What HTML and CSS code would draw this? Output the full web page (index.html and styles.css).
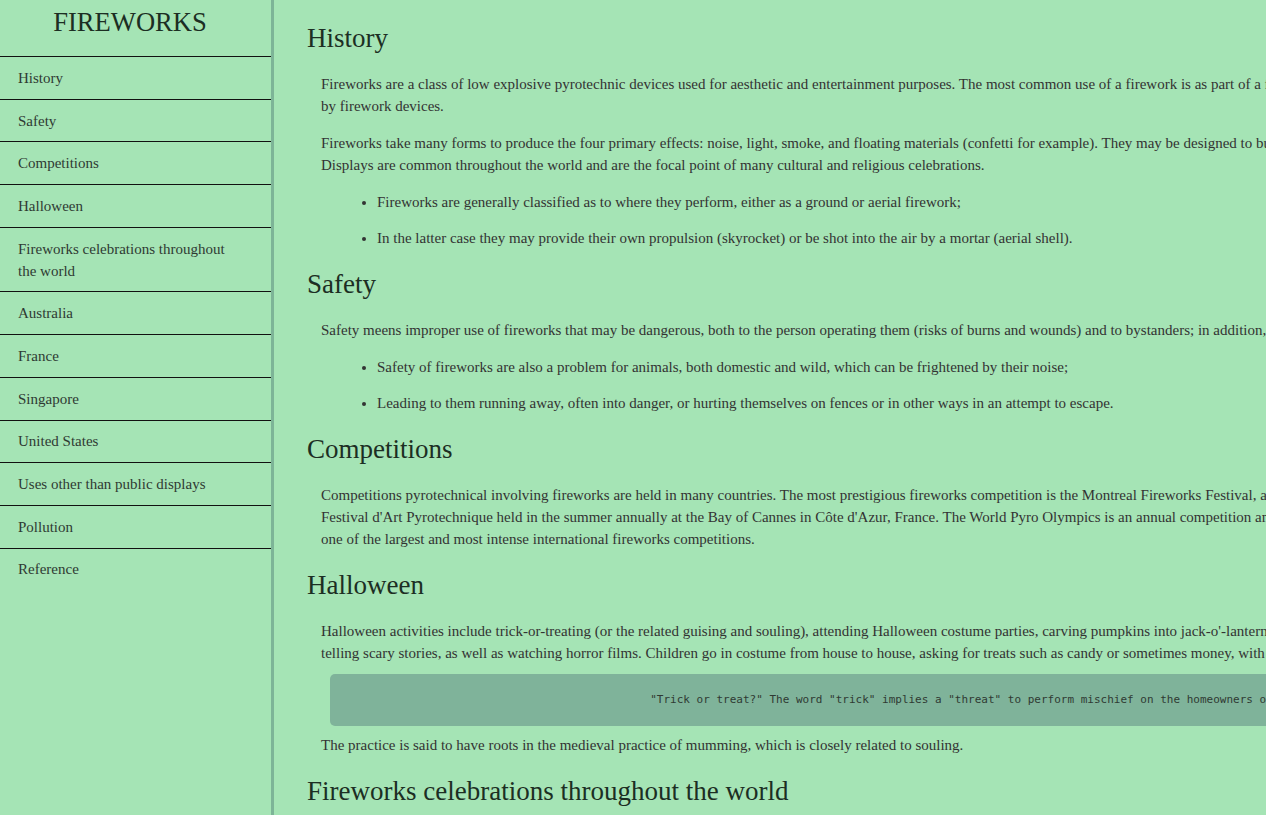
FILE: index.html
```html
<!DOCTYPE html>
<html lang="en">
<head>
  <meta charset="utf-8">
  <title>Fireworks</title>
  <link rel="stylesheet" href="styles.css">
</head>
<body>
  <nav id="navbar" class="navbar">
    <header class="nav-title">FIREWORKS</header>
    <ul class="nav-list">
      <li><a class="nav-link" href="#History">History</a></li>
      <li><a class="nav-link" href="#Safety">Safety</a></li>
      <li><a class="nav-link" href="#Competitions">Competitions</a></li>
      <li><a class="nav-link" href="#Halloween">Halloween</a></li>
      <li><a class="nav-link" href="#Fireworks_celebrations_throughout_the_world">Fireworks celebrations throughout the world</a></li>
      <li><a class="nav-link" href="#Australia">Australia</a></li>
      <li><a class="nav-link" href="#France">France</a></li>
      <li><a class="nav-link" href="#Singapore">Singapore</a></li>
      <li><a class="nav-link" href="#United_States">United States</a></li>
      <li><a class="nav-link" href="#Uses_other_than_public_displays">Uses other than public displays</a></li>
      <li><a class="nav-link" href="#Pollution">Pollution</a></li>
      <li><a class="nav-link" href="#Reference">Reference</a></li>
    </ul>
  </nav>

  <main id="main-doc" class="main-doc">
    <section class="main-section" id="History">
      <header class="section-title">History</header>
      <p>Fireworks are a class of low explosive pyrotechnic devices used for aesthetic and entertainment purposes. The most common use of a firework is as part of a fireworks display (also called a firework show or pyrotechnic), a display of the effects produced by firework devices.</p>
      <p>Fireworks take many forms to produce the four primary effects: noise, light, smoke, and floating materials (confetti for example). They may be designed to burn with colored flames and sparks including red, orange, yellow, green, blue, purple and silver. Displays are common throughout the world and are the focal point of many cultural and religious celebrations.</p>
      <ul class="points">
        <li>Fireworks are generally classified as to where they perform, either as a ground or aerial firework;</li>
        <li>In the latter case they may provide their own propulsion (skyrocket) or be shot into the air by a mortar (aerial shell).</li>
      </ul>
    </section>

    <section class="main-section" id="Safety">
      <header class="section-title">Safety</header>
      <p>Safety meens improper use of fireworks that may be dangerous, both to the person operating them (risks of burns and wounds) and to bystanders; in addition, they may start fires after landing on flammable material.</p>
      <ul class="points">
        <li>Safety of fireworks are also a problem for animals, both domestic and wild, which can be frightened by their noise;</li>
        <li>Leading to them running away, often into danger, or hurting themselves on fences or in other ways in an attempt to escape.</li>
      </ul>
    </section>

    <section class="main-section" id="Competitions">
      <header class="section-title">Competitions</header>
      <p>Competitions pyrotechnical involving fireworks are held in many countries. The most prestigious fireworks competition is the Montreal Fireworks Festival, an annual competition held in Montreal, Quebec, Canada. Another magnificent competition is Le Festival d'Art Pyrotechnique held in the summer annually at the Bay of Cannes in Côte d'Azur, France. The World Pyro Olympics is an annual competition amongst the top fireworks companies in the world. It is held in Manila, Philippines. The event is one of the largest and most intense international fireworks competitions.</p>
    </section>

    <section class="main-section" id="Halloween">
      <header class="section-title">Halloween</header>
      <p>Halloween activities include trick-or-treating (or the related guising and souling), attending Halloween costume parties, carving pumpkins into jack-o'-lanterns, lighting fires, apple bobbing, divination games, playing pranks, visiting haunted attractions, telling scary stories, as well as watching horror films. Children go in costume from house to house, asking for treats such as candy or sometimes money, with the question, "Trick or treat?"<code class="quote">"Trick or treat?" The word "trick" implies a "threat" to perform mischief on the homeowners or their property if no treat is given.</code>The practice is said to have roots in the medieval practice of mumming, which is closely related to souling.</p>
    </section>

    <section class="main-section" id="Fireworks_celebrations_throughout_the_world">
      <header class="section-title">Fireworks celebrations throughout the world</header>
      <p>Fireworks are used around the world to celebrate national holidays, the new year, religious festivals and many other special occasions.</p>
    </section>

    <section class="main-section" id="Australia">
      <header class="section-title">Australia</header>
      <p>Sydney, Australia hosts one of the largest New Year's Eve fireworks displays in the world, launched from the Sydney Harbour Bridge and barges on the harbour.</p>
    </section>

    <section class="main-section" id="France">
      <header class="section-title">France</header>
      <p>Fireworks are traditionally set off in France on Bastille Day, the national holiday held on 14 July, most famously around the Eiffel Tower in Paris.</p>
    </section>

    <section class="main-section" id="Singapore">
      <header class="section-title">Singapore</header>
      <p>The Singapore Fireworks Celebrations is an annual event held in Singapore as part of its National Day celebrations.</p>
    </section>

    <section class="main-section" id="United_States">
      <header class="section-title">United States</header>
      <p>In the United States, fireworks displays are a central part of Independence Day celebrations on the Fourth of July.</p>
    </section>

    <section class="main-section" id="Uses_other_than_public_displays">
      <header class="section-title">Uses other than public displays</header>
      <p>Fireworks are also used for signalling, in film special effects and as a means of scaring birds and other animals away from crops and airports.</p>
    </section>

    <section class="main-section" id="Pollution">
      <header class="section-title">Pollution</header>
      <p>Fireworks produce smoke and dust that may contain residues of heavy metals, sulfur-coal compounds and some low concentration toxic chemicals.</p>
    </section>

    <section class="main-section" id="Reference">
      <header class="section-title">Reference</header>
      <p>All the documentation in this page is taken from Wikipedia.</p>
    </section>
  </main>
</body>
</html>
```
FILE: styles.css
```css
html {
  scrollbar-width: none;
}
html::-webkit-scrollbar {
  display: none;
}

body {
  margin: 0;
  display: flex;
  align-items: flex-start;
  background: #a5e4b5;
  color: #333;
  font-family: "Liberation Serif", "Times New Roman", serif;
  font-size: 15px;
  line-height: 22px;
}

/* ---------- sidebar ---------- */
.navbar {
  position: sticky;
  top: 0;
  flex: 0 0 271px;
  height: 100vh;
  border-right: 3px solid #7db497;
  background: #a5e4b5;
}

.nav-title {
  height: 56px;
  box-sizing: border-box;
  padding: 7px 11px 0 0;
  text-align: center;
  font-size: 26.6px;
  line-height: 30px;
  color: #1c2e23;
}

.nav-list {
  list-style: none;
  margin: 0;
  padding: 0;
}

.nav-list li {
  border-top: 1px solid #111;
}

.nav-link {
  display: block;
  padding: 9.85px 30px 9.85px 18px;
  color: #2f3a33;
  text-decoration: none;
}

/* ---------- main content ---------- */
.main-doc {
  flex: 0 0 1578px;
  box-sizing: border-box;
  padding: 3px 0 40px 33px;
}

.section-title {
  margin: 20px 0;
  font-size: 27px;
  line-height: 30px;
  color: #1c2e23;
}

.main-section p {
  margin: 15px 0 15px 14px;
}

.points {
  margin: 15px 0 15px 14px;
  padding-left: 56px;
}

.points li + li {
  margin-top: 14px;
}

.quote {
  display: block;
  margin: 10px 14px 8px 9px;
  padding: 19px 0;
  border-radius: 5px;
  background: #7fb39a;
  color: #2f3a33;
  text-align: center;
  white-space: pre;
  font-family: "DejaVu Sans Mono", "Liberation Mono", monospace;
  font-size: 11px;
  line-height: 14px;
}
```
